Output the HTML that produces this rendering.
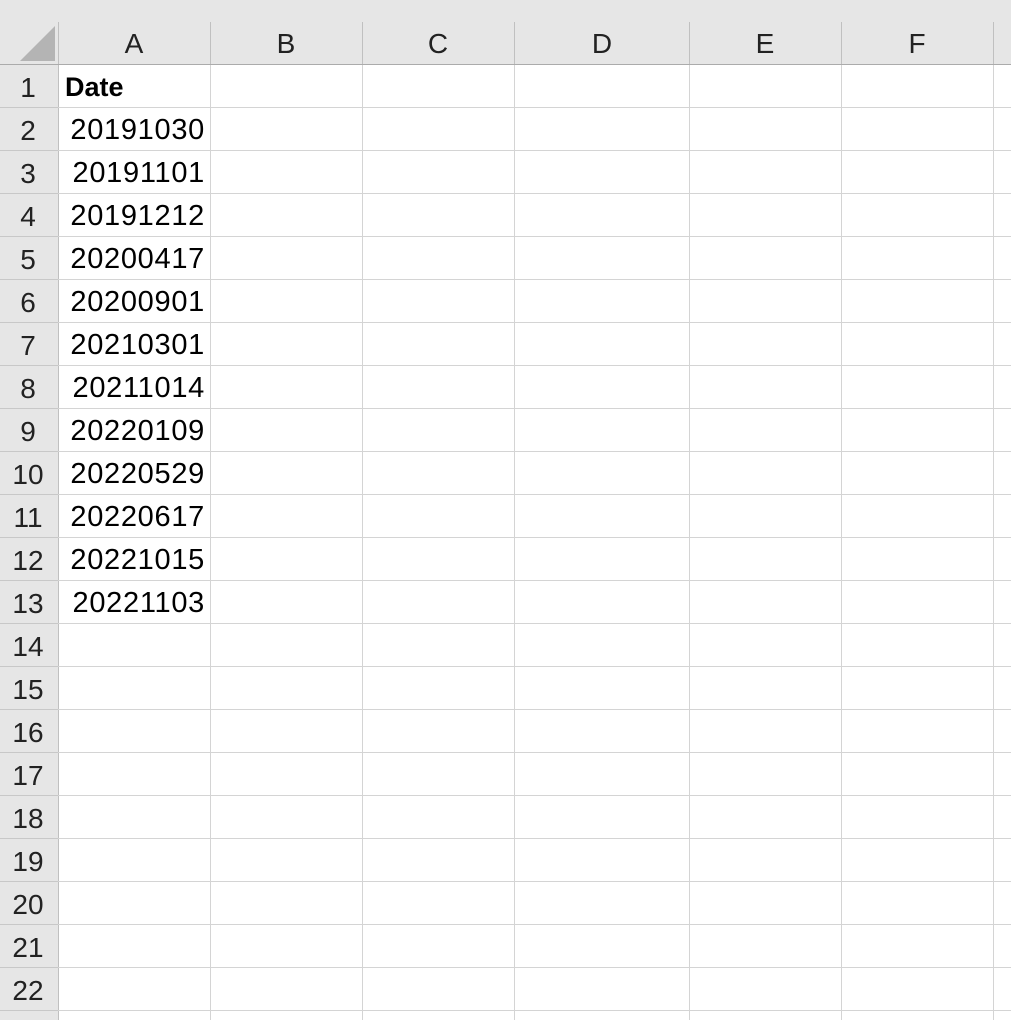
<!DOCTYPE html>
<html><head><style>
body{margin:0;width:1011px;height:1020px;overflow:hidden;background:#fff;font-family:"Liberation Sans",sans-serif;position:relative}
.hdr{position:absolute;left:0;top:0;width:1011px;height:64px;background:#e6e6e6;border-bottom:1px solid #ababab}
.rh{position:absolute;left:0;top:65px;width:58px;height:955px;background:#e6e6e6;border-right:1px solid #c0c0c0}
.v{position:absolute;top:65px;width:1px;height:955px;background:#d4d4d4}
.vh{position:absolute;top:22px;width:1px;height:42px;background:#c0c0c0}
.h{position:absolute;left:0;width:1011px;height:1px;background:#d4d4d4}
.hh{position:absolute;left:0;width:58px;height:1px;background:#c8c8c8}
.c{position:absolute;top:28px;font-size:28px;color:#222;text-align:center;width:40px}
.r{position:absolute;left:-1px;width:58px;text-align:center;font-size:28px;color:#222}
.t{position:absolute;right:806px;font-size:29px;letter-spacing:0.7px;color:#000}
</style></head><body>
<div class="hdr"></div>
<div class="rh"></div>
<svg style="position:absolute;left:20px;top:26px" width="36" height="36"><polygon points="35,0 35,35 0,35" fill="#b4b4b4"/></svg>
<div class="v" style="left:210px"></div><div class="v" style="left:362px"></div><div class="v" style="left:514px"></div><div class="v" style="left:689px"></div><div class="v" style="left:841px"></div><div class="v" style="left:993px"></div>
<div class="vh" style="left:58px"></div><div class="vh" style="left:210px"></div><div class="vh" style="left:362px"></div><div class="vh" style="left:514px"></div><div class="vh" style="left:689px"></div><div class="vh" style="left:841px"></div><div class="vh" style="left:993px"></div>
<div class="c" style="left:114px">A</div><div class="c" style="left:266px">B</div><div class="c" style="left:418px">C</div><div class="c" style="left:582px">D</div><div class="c" style="left:745px">E</div><div class="c" style="left:897px">F</div>
<div class="h" style="top:107px"></div><div class="h" style="top:150px"></div><div class="h" style="top:193px"></div><div class="h" style="top:236px"></div><div class="h" style="top:279px"></div><div class="h" style="top:322px"></div><div class="h" style="top:365px"></div><div class="h" style="top:408px"></div><div class="h" style="top:451px"></div><div class="h" style="top:494px"></div><div class="h" style="top:537px"></div><div class="h" style="top:580px"></div><div class="h" style="top:623px"></div><div class="h" style="top:666px"></div><div class="h" style="top:709px"></div><div class="h" style="top:752px"></div><div class="h" style="top:795px"></div><div class="h" style="top:838px"></div><div class="h" style="top:881px"></div><div class="h" style="top:924px"></div><div class="h" style="top:967px"></div><div class="h" style="top:1010px"></div>
<div class="hh" style="top:107px"></div><div class="hh" style="top:150px"></div><div class="hh" style="top:193px"></div><div class="hh" style="top:236px"></div><div class="hh" style="top:279px"></div><div class="hh" style="top:322px"></div><div class="hh" style="top:365px"></div><div class="hh" style="top:408px"></div><div class="hh" style="top:451px"></div><div class="hh" style="top:494px"></div><div class="hh" style="top:537px"></div><div class="hh" style="top:580px"></div><div class="hh" style="top:623px"></div><div class="hh" style="top:666px"></div><div class="hh" style="top:709px"></div><div class="hh" style="top:752px"></div><div class="hh" style="top:795px"></div><div class="hh" style="top:838px"></div><div class="hh" style="top:881px"></div><div class="hh" style="top:924px"></div><div class="hh" style="top:967px"></div><div class="hh" style="top:1010px"></div>
<div class="r" style="top:72px">1</div><div class="r" style="top:115px">2</div><div class="r" style="top:158px">3</div><div class="r" style="top:201px">4</div><div class="r" style="top:244px">5</div><div class="r" style="top:287px">6</div><div class="r" style="top:330px">7</div><div class="r" style="top:373px">8</div><div class="r" style="top:416px">9</div><div class="r" style="top:459px">10</div><div class="r" style="top:502px">11</div><div class="r" style="top:545px">12</div><div class="r" style="top:588px">13</div><div class="r" style="top:631px">14</div><div class="r" style="top:674px">15</div><div class="r" style="top:717px">16</div><div class="r" style="top:760px">17</div><div class="r" style="top:803px">18</div><div class="r" style="top:846px">19</div><div class="r" style="top:889px">20</div><div class="r" style="top:932px">21</div><div class="r" style="top:975px">22</div>
<div style="position:absolute;left:65px;top:72px;font-size:27px;font-weight:bold">Date</div>
<div class="t" style="top:114px">20191030</div><div class="t" style="top:157px">20191101</div><div class="t" style="top:200px">20191212</div><div class="t" style="top:243px">20200417</div><div class="t" style="top:286px">20200901</div><div class="t" style="top:329px">20210301</div><div class="t" style="top:372px">20211014</div><div class="t" style="top:415px">20220109</div><div class="t" style="top:458px">20220529</div><div class="t" style="top:501px">20220617</div><div class="t" style="top:544px">20221015</div><div class="t" style="top:587px">20221103</div>
</body></html>
